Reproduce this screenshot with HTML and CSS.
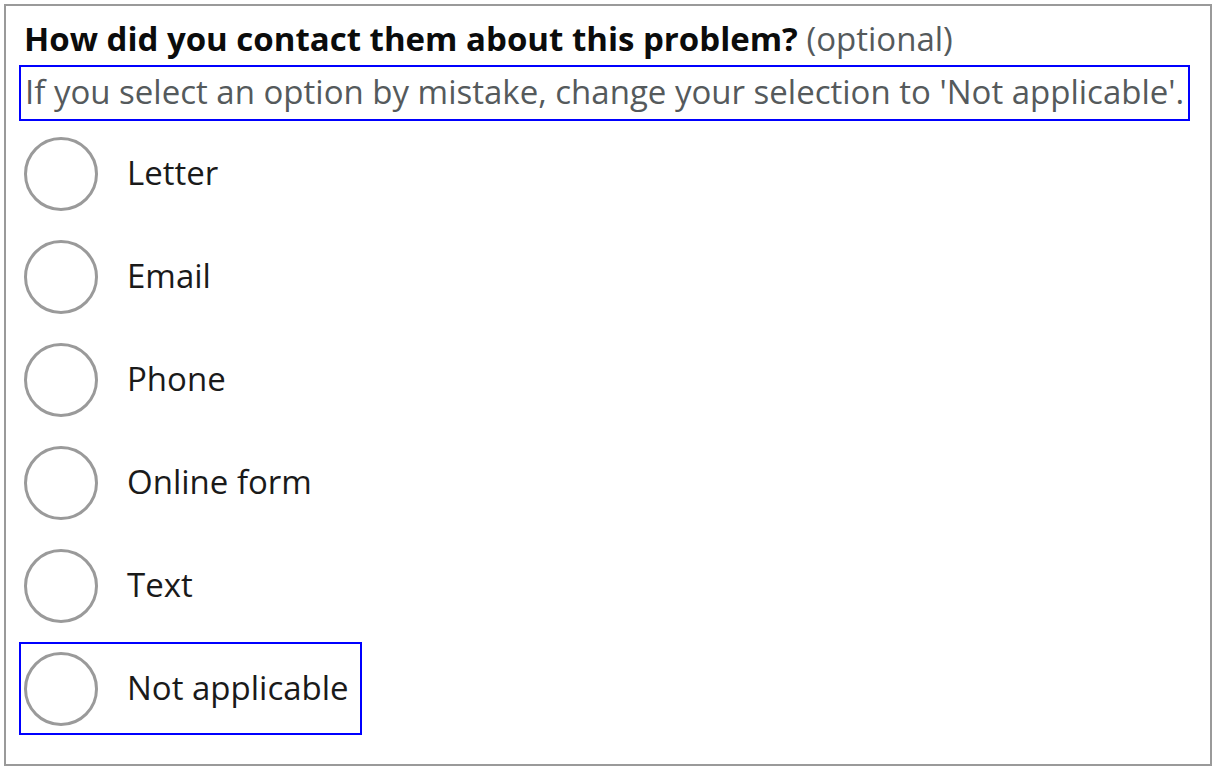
FILE: index.html
```html
<!DOCTYPE html>
<html lang="en">
<head>
<meta charset="utf-8">
<title>Contact method</title>
<link rel="stylesheet" href="styles.css">
</head>
<body>
<div class="panel">
  <fieldset class="fieldset">
    <legend class="legend"><span class="legend-main">How did you contact them about this problem?</span> <span class="legend-opt">(optional)</span></legend>
    <div class="hint">If you select an option by mistake, change your selection to 'Not applicable'.</div>
    <div class="radios">
      <label class="radio"><span class="circle"></span><span class="radio-label">Letter</span></label>
      <label class="radio"><span class="circle"></span><span class="radio-label">Email</span></label>
      <label class="radio"><span class="circle"></span><span class="radio-label">Phone</span></label>
      <label class="radio"><span class="circle"></span><span class="radio-label">Online form</span></label>
      <label class="radio"><span class="circle"></span><span class="radio-label">Text</span></label>
      <label class="radio radio-focus"><span class="circle"></span><span class="radio-label">Not applicable</span></label>
    </div>
  </fieldset>
</div>
</body>
</html>
```
FILE: styles.css
```css
html, body {
  margin: 0;
  padding: 0;
  background: #ffffff;
}

body {
  font-family: "Open Sans", "Noto Sans", "Liberation Sans", sans-serif;
  color: #111111;
}

.panel {
  box-sizing: border-box;
  width: 1208px;
  height: 762px;
  margin: 4px 0 0 4px;
  border: 2px solid #9a9a9a;
  padding: 13px 10px 0 13px;
}

.fieldset {
  margin: 0;
  padding: 0;
  border: 0;
  min-width: 0;
}

.legend {
  padding: 0 0 0 5px;
  font-size: 33px;
  line-height: 40px;
  white-space: nowrap;
}

.legend-main {
  font-weight: 700;
  color: #0b0c0c;
}

.legend-opt {
  font-weight: 400;
  color: #555a5c;
}

.hint {
  display: inline-block;
  margin-top: 6px;
  border: 2px solid #0000ff;
  padding: 5px 4px 7px 4px;
  font-size: 33px;
  line-height: 40px;
  color: #555a5c;
  white-space: nowrap;
}

.radios {
  display: flex;
  flex-direction: column;
  align-items: flex-start;
  gap: 10px;
  margin-top: 6px;
}

.radio {
  display: flex;
  align-items: center;
  gap: 29px;
  border: 2px solid transparent;
  padding: 8px 11px 7px 3px;
  cursor: pointer;
}

.radio-focus {
  border-color: #0000ff;
}

.circle {
  box-sizing: border-box;
  width: 74px;
  height: 74px;
  border: 3px solid #9a9a9a;
  border-radius: 50%;
  flex: none;
}

.radio-label {
  font-size: 33px;
  line-height: 40px;
  padding-bottom: 2px;
  color: #1a1a1a;
}
```
